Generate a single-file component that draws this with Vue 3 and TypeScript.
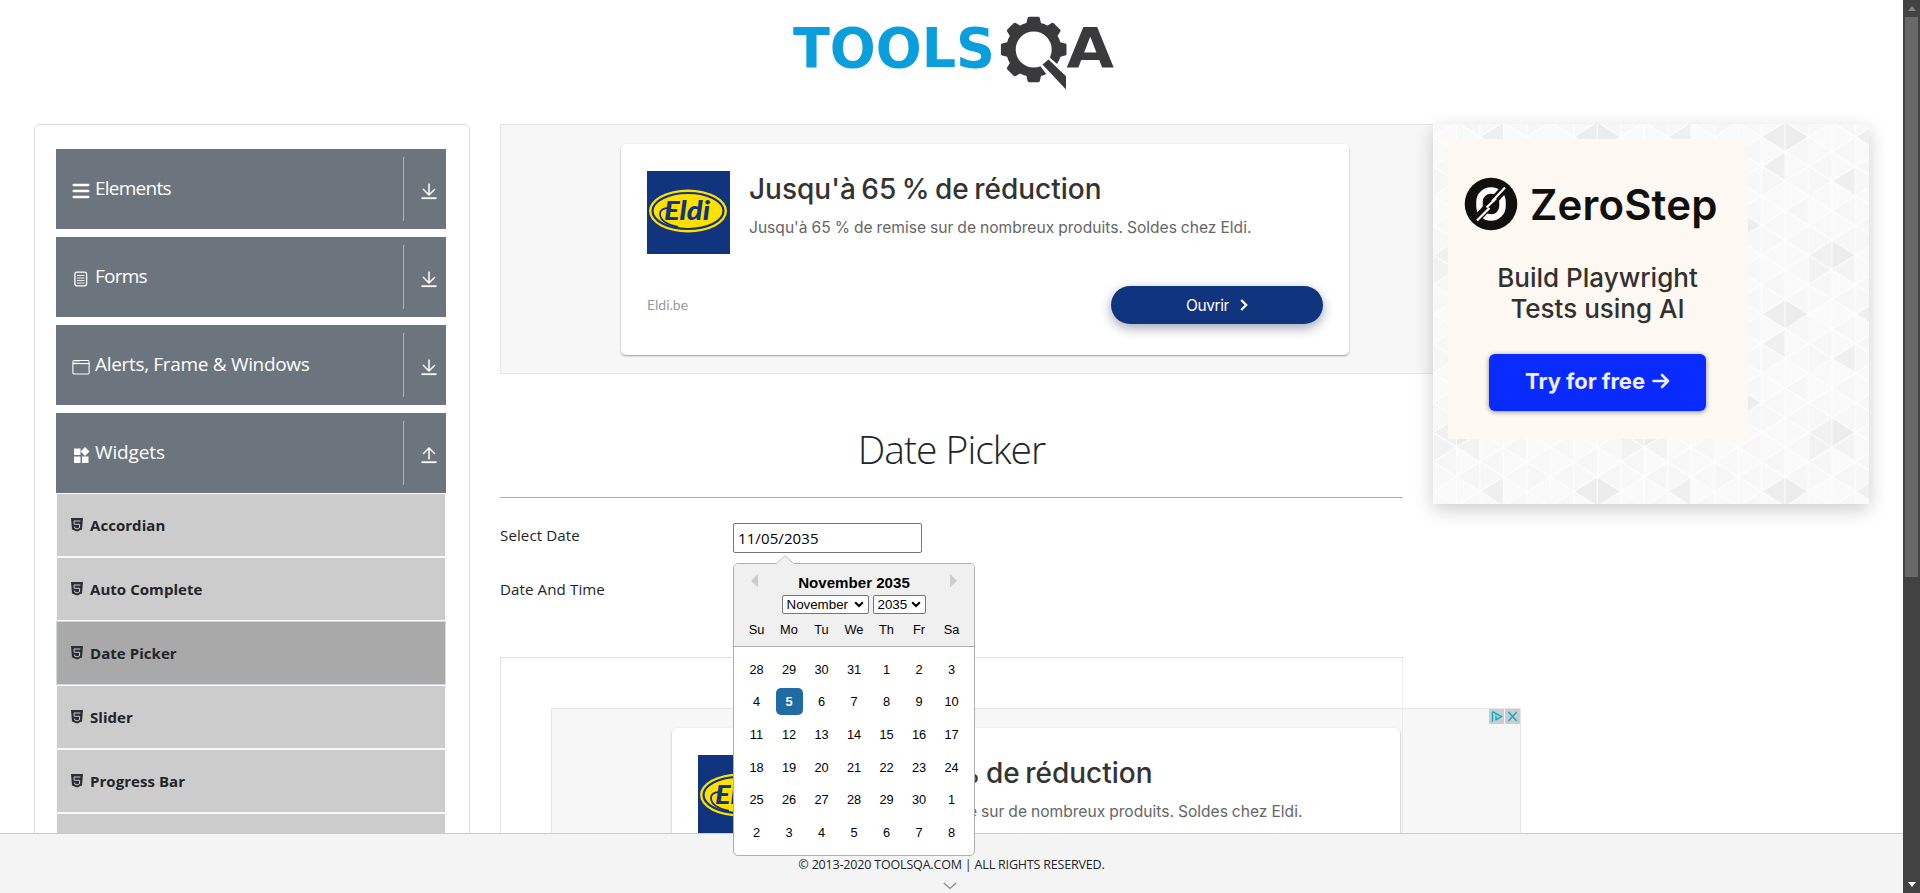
<script setup lang="ts">
import { ref } from 'vue'

interface Group {
  name: string
  icon: string
  open: boolean
  spacing: string
}

const groups: Group[] = [
  { name: 'Elements', icon: 'bars', open: false, spacing: 'tight' },
  { name: 'Forms', icon: 'form', open: false, spacing: 'tight' },
  { name: 'Alerts, Frame & Windows', icon: 'window', open: false, spacing: 'normal' },
  { name: 'Widgets', icon: 'widgets', open: true, spacing: 'loose' },
]

const items: string[] = ['Accordian', 'Auto Complete', 'Date Picker', 'Slider', 'Progress Bar', 'Tabs']
const active = ref('Date Picker')

const weekDays: string[] = ['Su', 'Mo', 'Tu', 'We', 'Th', 'Fr', 'Sa']
const weeks: number[][] = [
  [28, 29, 30, 31, 1, 2, 3],
  [4, 5, 6, 7, 8, 9, 10],
  [11, 12, 13, 14, 15, 16, 17],
  [18, 19, 20, 21, 22, 23, 24],
  [25, 26, 27, 28, 29, 30, 1],
  [2, 3, 4, 5, 6, 7, 8],
]

// Triangular lattice behind the promo: repeats every 8 strips and 6 rows.
const COL = 23.47
const ROW = 29.56
const tileW = COL * 8
const tileH = ROW * 6

interface Tri {
  points: string
  fill: string
}

const dark: Record<string, string> = {
  '6L0': '#ededed', '7R0': '#ececec', '2L0': '#efefef', '6L1': '#efefef', '1L2': '#efefef',
  '5R3': '#ededed', '0L4': '#f0f0f0', '1R4': '#ececec', '0R5': '#f2f2f2', '1L5': '#f3f3f3',
}
const light = ['#f8f8f8', '#f9f9f9', '#f6f6f6', '#fafafa', '#f7f7f7', '#f9f9f9']

// dir L: apex on the left edge of the strip, R: apex on the right edge
const triangles: Tri[] = []
for (let s = 0; s < 8; s++) {
  for (const dir of ['L', 'R']) {
    const apexCol = dir === 'L' ? s : s + 1
    const baseCol = dir === 'L' ? s + 1 : s
    for (let k = -1; k < 7; k++) {
      const y = (baseCol % 2 === 0 ? -2 : 12.78) + k * ROW
      const row = (k + 6) % 6
      const seed = (s * 5 + row * 7 + (dir === 'L' ? 3 : 0) + s * row) % light.length
      triangles.push({
        points: `${apexCol * COL},${y} ${baseCol * COL},${y - ROW / 2} ${baseCol * COL},${y + ROW / 2}`,
        fill: dark[`${s}${dir}${row}`] ?? light[seed],
      })
    }
  }
}
</script>

<template>
  <div class="window">
    <div class="page">
      <header class="top">
        <svg class="brand" width="330" height="84" viewBox="0 0 330 84">
          <text class="brand-tools" x="1" y="55" textLength="202" lengthAdjust="spacingAndGlyphs">TOOLS</text>
          <g fill="#3a393b">
            <path
              v-for="a in [0, 45, 90, 180, 225, 270, 315]"
              :key="a"
              :transform="`rotate(${a} 241.700 37.500)`"
              d="M234.200 12l1.400-6q.4-1.300 1.700-1.300h8.800q1.300 0 1.700 1.300l1.400 6z"
            />
            <path
              fill-rule="evenodd"
              d="M241.700 9.900a27.600 27.600 0 1 1 0 55.200a27.600 27.600 0 1 1 0-55.200zM241.700 19.500a18 18 0 1 0 0 36a18 18 0 1 0 0-36z"
            />
            <path d="M248.500 54.500L258 45.500L276 62V84L262 72z" fill="#fff" />
            <path d="M250.500 52.500L256.500 47.500L274 64.200V77.500z" />
            <path d="M259 46.500l5.500 4.500 6-9.500-9-2z" />
          </g>
          <text class="brand-a" x="274.500" y="55" textLength="47.500" lengthAdjust="spacingAndGlyphs">A</text>
        </svg>
      </header>

      <div class="body">
        <aside class="sidebar">
          <div v-for="g in groups" :key="g.name" class="group">
            <div class="group-head">
              <div class="group-title">
                <svg class="group-icon" width="18" height="18" viewBox="0 0 18 18">
                  <g v-if="g.icon === 'bars'" stroke="#fff" stroke-width="2.600" stroke-linecap="round">
                    <path d="M1.800 3h14.400M1.800 9h14.400M1.800 15h14.400" />
                  </g>
                  <g v-else-if="g.icon === 'form'" fill="none" stroke="#fff">
                    <rect x="2.900" y="2.200" width="11.700" height="13.600" rx="2" stroke-width="1.300" />
                    <path d="M5 5.500h7.500M5 8h7.500M5 10.500h7.500M5 13h7.500" stroke-width="1" opacity=".85" />
                  </g>
                  <g v-else-if="g.icon === 'window'" fill="none" stroke="#fff">
                    <rect x=".9" y="2.500" width="16.200" height="13.500" rx="1.300" stroke-width="1.100" />
                    <path d="M1 5.600h16" stroke-width="1.100" />
                    <path d="M2.500 4h5" stroke-width="1" stroke-dasharray="1 1" />
                  </g>
                  <g v-else fill="#fff">
                    <path d="M2 2.500h6.500V9H2zM2 10.500h6.500V17H2zM10 10.500h6.500V17H10zM13 1l4.500 4.500L13 10 8.700 5.500z" />
                  </g>
                </svg>
                <span :class="['group-name', g.spacing]">{{ g.name }}</span>
              </div>
              <div class="group-toggle">
                <svg width="16" height="18" viewBox="0 0 16 18" fill="none" stroke="#fff" stroke-width="1.500">
                  <path d="M.5 16.200h15" stroke-width="1.800" />
                  <path v-if="g.open" d="M8 13.500V2.500M2 8l6-6 6 6" />
                  <path v-else d="M8 1.500V13M2 7l6 6 6-6" />
                </svg>
              </div>
            </div>
            <ul v-if="g.open" class="menu">
              <li v-for="it in items" :key="it" :class="['menu-item', { current: it === active }]" @click="active = it">
                <svg width="12" height="14" viewBox="0 0 12 14">
                  <path d="M0 0h12l-1 11.600L6 13.600 1 11.600z" fill="#2b2f34" />
                  <path d="M9.400 3H3l.2 3.300h5.500l-.3 3.700L6 10.800l-2.400-.8-.1-1.300" fill="none" stroke="#c8c8c8" stroke-width="1" />
                </svg>
                <span>{{ it }}</span>
              </li>
            </ul>
          </div>
        </aside>

        <main class="content">
          <section class="ad">
            <div class="ad-card">
              <div class="ad-main">
                <svg class="eldi" width="83" height="83" viewBox="0 0 83 83">
                  <rect width="83" height="83" fill="#11347f" />
                  <ellipse cx="41" cy="40" rx="39" ry="21.500" fill="#ffe000" />
                  <ellipse cx="41" cy="40" rx="35.500" ry="18" fill="#ffe000" stroke="#11347f" stroke-width="2.200" />
                  <path d="M22 37q-9 0-9 6q0 9 18 13" fill="none" stroke="#11347f" stroke-width="1.800" />
                  <text class="eldi-text" x="17" y="49" textLength="46" lengthAdjust="spacingAndGlyphs">Eldi</text>
                </svg>
                <div class="ad-copy">
                  <div class="ad-title">Jusqu'à 65 % de réduction</div>
                  <div class="ad-text">Jusqu'à 65 % de remise sur de nombreux produits. Soldes chez Eldi.</div>
                </div>
              </div>
              <div class="ad-foot">
                <span class="ad-site">Eldi.be</span>
                <div class="ad-button">
                  <span>Ouvrir</span>
                  <svg width="8" height="12" viewBox="0 0 8 12"><path d="M1.200 1l5 5-5 5" fill="none" stroke="#fff" stroke-width="2.300" /></svg>
                </div>
              </div>
            </div>
          </section>

          <h1 class="title">Date Picker</h1>
          <div class="rule"></div>

          <div class="field">
            <label class="label">Select Date</label>
            <div class="control">
              <div class="input">11/05/2035</div>
              <div class="picker">
                <svg class="notch" width="18" height="9" viewBox="0 0 18 9">
                  <path d="M0 9L9 .5L18 9z" fill="#f0f0f0" />
                  <path d="M.3 8.500L9 .6L17.700 8.500" fill="none" stroke="#c4c4c4" />
                </svg>
                <div class="picker-head">
                  <div class="picker-nav">
                    <svg width="8" height="14" viewBox="0 0 8 14"><path d="M7 0v13.500L0 6.750z" fill="#ccc" /></svg>
                    <span class="picker-month">November 2035</span>
                    <svg width="8" height="14" viewBox="0 0 8 14"><path d="M1 0v13.500L8 6.750z" fill="#ccc" /></svg>
                  </div>
                  <div class="selects">
                    <div v-for="s in ['November', '2035']" :key="s" :class="['select', s === '2035' ? 'year' : 'month']">
                      <span>{{ s }}</span>
                      <svg width="10" height="7" viewBox="0 0 10 7"><path d="M1.200 1.200L5 5l3.800-3.800" fill="none" stroke="#000" stroke-width="2" /></svg>
                    </div>
                  </div>
                  <div class="days names">
                    <span v-for="d in weekDays" :key="d">{{ d }}</span>
                  </div>
                </div>
                <div class="weeks">
                  <div v-for="(w, i) in weeks" :key="i" class="days">
                    <span v-for="d in w" :key="d" :class="{ selected: i === 1 && d === 5 }">{{ d }}</span>
                  </div>
                </div>
              </div>
            </div>
          </div>
          <div class="field second">
            <label class="label">Date And Time</label>
          </div>

          <section class="frame">
            <div class="ad lower">
              <div class="ad-card">
                <div class="ad-main">
                  <svg class="eldi" width="83" height="83" viewBox="0 0 83 83">
                    <rect width="83" height="83" fill="#11347f" />
                    <ellipse cx="41" cy="40" rx="39" ry="21.500" fill="#ffe000" />
                    <ellipse cx="41" cy="40" rx="35.500" ry="18" fill="#ffe000" stroke="#11347f" stroke-width="2.200" />
                    <path d="M22 37q-9 0-9 6q0 9 18 13" fill="none" stroke="#11347f" stroke-width="1.800" />
                    <text class="eldi-text" x="17" y="49" textLength="46" lengthAdjust="spacingAndGlyphs">Eldi</text>
                  </svg>
                  <div class="ad-copy">
                    <div class="ad-title">Jusqu'à 65 % de réduction</div>
                    <div class="ad-text">Jusqu'à 65 % de remise sur de nombreux produits. Soldes chez Eldi.</div>
                  </div>
                </div>
              </div>
              <svg class="choices" width="31" height="15" viewBox="0 0 31 15" fill="none" stroke="#00aecd" stroke-width="1.400">
                <path d="M0 0h15v15H0zM16 0h15v15H16z" fill="#ccc" stroke="none" />
                <path d="M3.500 2.500v10.200M3.500 2.500L12.500 7.600L6.500 11.200M7 5.300v1M7 7.300v4" />
                <path d="M19.300 3l8.500 9M27.800 3l-8.500 9" />
              </svg>
            </div>
          </section>
        </main>

        <aside class="promo">
          <svg class="lattice" width="436" height="380">
            <defs>
              <pattern id="tri" :width="tileW" :height="tileH" patternUnits="userSpaceOnUse">
                <polygon v-for="(t, i) in triangles" :key="i" :points="t.points" :fill="t.fill" stroke="#fefefe" stroke-width="1" />
              </pattern>
            </defs>
            <rect width="436" height="380" fill="url(#tri)" />
          </svg>
          <div class="zero">
            <div class="zero-brand">
              <svg width="54" height="54" viewBox="0 0 54 54">
                <circle cx="27" cy="27" r="26.300" fill="#11100f" />
                <rect x="15.500" y="13.500" width="23" height="27" rx="11.300" fill="none" stroke="#fff" stroke-width="6.500" />
                <path d="M10 45L43 9" stroke="#11100f" stroke-width="8" />
                <path d="M13 43.500L25.500 31M22.500 30.500L32 21.500M28 24.500L41 10.500" stroke="#fff" stroke-width="2.200" />
              </svg>
              <span>ZeroStep</span>
            </div>
            <div class="zero-copy"><span>Build Playwright</span><span>Tests using AI</span></div>
            <div class="zero-button">
              <span>Try for free</span>
              <svg width="18" height="16" viewBox="0 0 18 16" fill="none" stroke="#eef" stroke-width="2.600" stroke-linecap="round" stroke-linejoin="round">
                <path d="M1.500 8h14.500M10 2l6 6-6 6" />
              </svg>
            </div>
          </div>
        </aside>
      </div>

      <footer class="footer">
        <span>© 2013-2020 TOOLSQA.COM | ALL RIGHTS RESERVED.</span>
        <svg class="expand" width="14" height="8" viewBox="0 0 14 8"><path d="M.8 1L7 6.500 13.200 1" fill="none" stroke="#888" stroke-width="1.300" /></svg>
      </footer>
    </div>

    <div class="scrollbar">
      <svg width="8" height="5" viewBox="0 0 8 5"><path d="M0 5L4 0l4 5z" fill="#858585" /></svg>
      <div class="thumb"></div>
      <svg class="down" width="8" height="5" viewBox="0 0 8 5"><path d="M0 0h8L4 5z" fill="#fff" /></svg>
    </div>
  </div>
</template>

<style scoped>
.window {
  display: flex;
  width: 1920px;
  height: 893px;
  overflow: hidden;
  background: #fff;
  color: #212529;
  font-family: "Open Sans", "Noto Sans", sans-serif;
}
.page {
  position: relative;
  width: 1903px;
  height: 893px;
  overflow: hidden;
}
.top {
  height: 124px;
  box-sizing: border-box;
  padding: 12px 0 0 792px;
}
.brand { display: block; }
.brand-tools, .brand-a {
  font: 700 56px "DejaVu Sans", sans-serif;
  fill: #0a9fdc;
}
.brand-a { fill: #3a393b; }
.body {
  display: flex;
  align-items: flex-start;
  padding-left: 34px;
}
.sidebar {
  box-sizing: border-box;
  width: 436px;
  height: 1000px;
  padding: 24px 23px 0 21px;
  border: 1px solid #dcdcdc;
  border-radius: 5px;
  display: flex;
  flex-direction: column;
  gap: 8px;
}
.group-head {
  display: flex;
  align-items: center;
  height: 80px;
  background: #6c757d;
  color: #fff;
}
.group-title {
  flex: 1;
  display: flex;
  align-items: center;
  padding-left: 16px;
}
.group-icon { margin: 3px 5px 0 0; flex: none; }
.group-name {
  font-size: 19px;
  line-height: 28px;
  padding-bottom: 3px;
  white-space: nowrap;
}
.tight { letter-spacing: -0.75px; }
.normal { letter-spacing: -0.32px; }
.loose { letter-spacing: -0.13px; }
.group-toggle {
  width: 42px;
  height: 64px;
  border-left: 1px solid #b0b4b8;
  display: flex;
  align-items: center;
}
.group-toggle svg { margin: 3px 0 0 17px; }
.menu {
  margin: 0;
  padding: 0;
  list-style: none;
}
.menu-item {
  box-sizing: border-box;
  height: 64px;
  display: flex;
  align-items: center;
  gap: 7px;
  padding-left: 14px;
  background: #ccc;
  border: 1px solid #f8f9fa;
  font-size: 15px;
  font-weight: 700;
  letter-spacing: 0.05px;
}
.menu-item svg { margin-top: -1px; }
.menu-item.current { background: #a9a9a9; border-color: #d3d9de; }

.content { width: 903px; margin-left: 30px; flex: none; }
.ad {
  box-sizing: border-box;
  width: 970px;
  height: 250px;
  background: #f7f7f7;
  border: 1px solid #e5e5e5;
  padding: 19px 0 0 120px;
}
.ad-card {
  box-sizing: border-box;
  width: 728px;
  height: 211px;
  padding: 27px 26px 0;
  background: #fff;
  border-radius: 5px;
  box-shadow: 0 1px 2px rgba(0, 0, 0, 0.38);
}
.ad-main { display: flex; gap: 19px; }
.eldi { flex: none; }
.eldi-text {
  font: italic 900 27px "Lato", sans-serif;
  fill: #11347f;
}
.ad-copy { white-space: nowrap; font-family: "Inter", sans-serif; }
.ad-title {
  font-size: 28px;
  font-weight: 500;
  line-height: 36px;
  word-spacing: -2px;
  color: #333;
}
.ad-text {
  margin-top: 9px;
  font-size: 15.600px;
  line-height: 23px;
  word-spacing: -0.4px;
  color: #666;
}
.ad-foot {
  display: flex;
  justify-content: space-between;
  align-items: center;
  height: 38px;
  margin-top: 32px;
}
.ad-site { font: 14px "Lato", sans-serif; color: #999; padding-bottom: 2px; }
.ad-button {
  box-sizing: border-box;
  width: 212px;
  height: 38px;
  border-radius: 19px;
  background: #11347f;
  box-shadow: 0 4px 12px rgba(20, 30, 70, 0.4);
  color: #fff;
  display: flex;
  align-items: center;
  justify-content: center;
  gap: 11px;
  font: 15.500px "Inter", sans-serif;
  letter-spacing: -0.4px;
}
.title {
  margin: 48px 0 0;
  height: 54px;
  line-height: 54px;
  font-size: 39px;
  font-weight: 300;
  letter-spacing: -1px;
  text-align: center;
}
.rule { height: 1px; margin-top: 21px; background: #adadad; }
.field { display: flex; height: 30px; margin-top: 25px; }
.field.second { margin-top: 24px; }
.label { width: 233px; font-size: 15.100px; line-height: 25px; letter-spacing: 0.1px; }
.control { position: relative; }
.input {
  box-sizing: border-box;
  width: 189px;
  height: 30px;
  padding-left: 4px;
  border: 1px solid #767676;
  border-radius: 2px;
  font-size: 15px;
  line-height: 28px;
  letter-spacing: 0.1px;
  color: #000;
}
.picker {
  position: absolute;
  left: 0;
  top: 40px;
  z-index: 5;
  box-sizing: border-box;
  width: 242px;
  height: 293px;
  border: 1px solid #aeaeae;
  border-radius: 5px;
  background: #fff;
  font: 12.8px "Liberation Sans", Arial, sans-serif;
  color: #000;
}
.notch { position: absolute; left: 42px; top: -9px; }
.picker-head {
  box-sizing: border-box;
  height: 83px;
  padding-top: 9px;
  background: #f0f0f0;
  border-bottom: 1px solid #aeaeae;
  border-radius: 4px 4px 0 0;
}
.picker-nav {
  display: flex;
  justify-content: space-between;
  align-items: flex-start;
  height: 22px;
  padding: 1px 17px 0;
  box-sizing: border-box;
}
.picker-month { font-size: 15.100px; font-weight: 700; line-height: 18px; }
.selects {
  display: flex;
  justify-content: center;
  gap: 4px;
}
.select {
  box-sizing: border-box;
  height: 19px;
  border: 1px solid #767676;
  border-radius: 2px;
  background: #fff;
  display: flex;
  align-items: center;
  justify-content: space-between;
  padding: 0 4px;
  font-size: 13.333px;
}
.month { width: 87px; margin-left: -1px; }
.year { width: 53px; }
.days {
  display: grid;
  grid-template-columns: repeat(7, 32.500px);
  justify-content: center;
  height: 32.600px;
  align-items: center;
  justify-items: center;
}
.days span {
  width: 27px;
  height: 27px;
  line-height: 27px;
  text-align: center;
}
.days.names { margin-top: -1px; }
.days .selected { background: #216ba5; color: #fff; border-radius: 5px; font-weight: 700; }
.weeks { padding-top: 6px; }

.frame {
  position: relative;
  box-sizing: border-box;
  height: 300px;
  margin-top: 50px;
  padding: 50px 0 0 50px;
  border: 1px solid #dee2e6;
}
.frame::after {
  content: "";
  position: absolute;
  right: -1px;
  top: 0;
  width: 1px;
  height: 298px;
  background: #e8eaec;
}
.lower { position: relative; }
.choices { position: absolute; right: 0; top: 0; }

.promo {
  position: relative;
  z-index: 2;
  box-sizing: border-box;
  width: 436px;
  height: 380px;
  margin-left: 30px;
  padding: 15px;
  box-shadow: 0 6px 18px rgba(0, 0, 0, 0.2);
}
.lattice { position: absolute; left: 0; top: 0; }
.zero {
  position: relative;
  width: 300px;
  height: 300px;
  box-sizing: border-box;
  padding: 38px 17px 0 16px;
  background: #fdf8f2;
}
.zero-brand {
  display: flex;
  align-items: center;
  height: 54px;
  gap: 12px;
  font: 600 42px "Inter", sans-serif;
  letter-spacing: 0.15px;
  color: #11100f;
}
.zero-copy {
  display: flex;
  flex-direction: column;
  align-items: center;
  margin-top: 31px;
  font: 500 26px/31px "Inter", sans-serif;
  color: #33302e;
}
.zero-button {
  box-sizing: border-box;
  width: 217px;
  height: 57px;
  margin: 30px 0 0 25px;
  padding-bottom: 3px;
  border-radius: 6px;
  background: #0a2bff;
  box-shadow: 0 1px 5px rgba(0, 0, 0, 0.45);
  display: flex;
  align-items: center;
  justify-content: center;
  gap: 7px;
  font: 700 22px "Inter", sans-serif;
  letter-spacing: -0.05px;
  color: #eeeeff;
}
.footer {
  position: absolute;
  left: 0;
  right: 0;
  bottom: 0;
  z-index: 1;
  box-sizing: border-box;
  height: 60px;
  border-top: 1px solid #ccc;
  background: #f4f4f4;
  display: flex;
  justify-content: center;
  padding-top: 19px;
  font-size: 12.500px;
  line-height: 23px;
  letter-spacing: -0.18px;
}
.expand { position: absolute; left: 943px; bottom: 3px; }
.scrollbar {
  box-sizing: border-box;
  width: 17px;
  height: 893px;
  padding: 6px 0;
  background: #424242;
  display: flex;
  flex-direction: column;
  align-items: center;
}
.thumb { width: 13px; height: 560px; margin-top: 6px; background: #686868; }
.down { margin-top: auto; }
</style>
